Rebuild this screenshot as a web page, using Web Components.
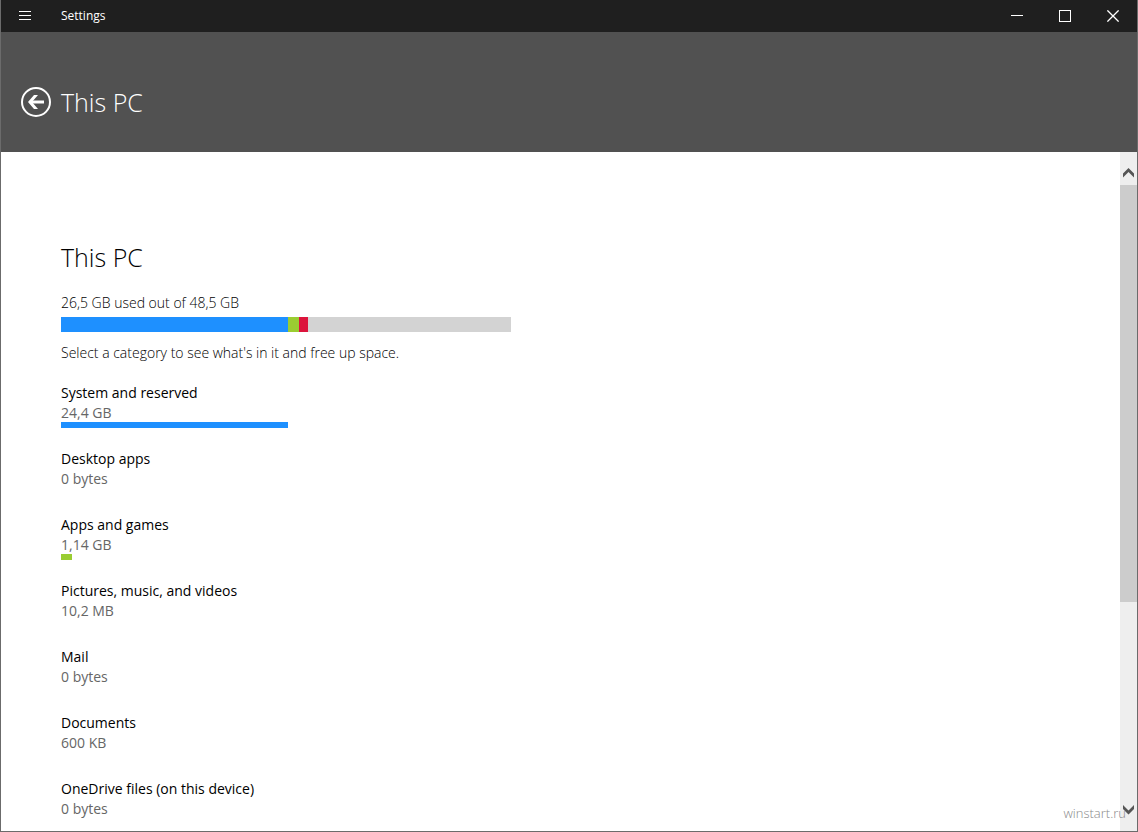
<!DOCTYPE html>
<html lang="en">
<head>
<meta charset="utf-8">
<title>Settings</title>
<style>
html, body { height: 100%; margin: 0; }
body { font-family: "Open Sans", "Noto Sans", sans-serif; font-size: 14px; line-height: 22px; color: #000; background: #fff; overflow: hidden; }
</style>
</head>
<body>
<settings-window>
  <title-bar slot="bar">Settings</title-bar>
  <page-header slot="header">This PC</page-header>
  <storage-summary heading="This PC" segments="227 #1e90ff,11 #9acd32,9 #dc143c" total="450">
    <span slot="usage">26,5 GB used out of 48,5 GB</span>
    <span slot="hint">Select a category to see what's in it and free up space.</span>
  </storage-summary>
  <storage-item size="24,4 GB" bar="227" color="#1e90ff">System and reserved</storage-item>
  <storage-item size="0 bytes">Desktop apps</storage-item>
  <storage-item size="1,14 GB" bar="11" color="#9acd32">Apps and games</storage-item>
  <storage-item size="10,2 MB">Pictures, music, and videos</storage-item>
  <storage-item size="0 bytes">Mail</storage-item>
  <storage-item size="600 KB">Documents</storage-item>
  <storage-item size="0 bytes">OneDrive files (on this device)</storage-item>
  <scroll-rail slot="rail"></scroll-rail>
  <water-mark slot="mark">winstart.ru</water-mark>
</settings-window>
<script>
const define = (name, html, setup) => customElements.define(name, class extends HTMLElement {
  constructor() {
    super();
    this.attachShadow({ mode: "open" }).innerHTML = html;
  }
  connectedCallback() { if (setup) setup(this, this.shadowRoot); }
});
const reset = `button { all: unset; box-sizing: border-box; display: grid; place-items: center; cursor: default; } svg { display: block; fill: none; stroke: currentColor; }`;

define("settings-window", `<style>
:host { box-sizing: border-box; position: relative; display: grid; grid-template-rows: auto auto minmax(0, 1fr); height: 100vh; border: solid #6b6b6b; border-width: 0 1px 1px; }
.body { display: grid; grid-template-columns: minmax(0, 1fr) 17px; min-height: 0; }
main { box-sizing: border-box; padding: 88px 60px 0; overflow: hidden; min-height: 0; }
</style>
<slot name="bar"></slot><slot name="header"></slot>
<div class="body"><main><slot></slot></main><slot name="rail"></slot></div><slot name="mark"></slot>`);

define("title-bar", `<style>${reset}
:host { display: flex; height: 32px; background: #1f1f1f; color: #fff; font-size: 12px; line-height: 32px; }
button { width: 48px; height: 32px; }
.title { flex: 1; padding-left: 12px; }
</style>
<button type="button" aria-label="Menu"><svg width="12" height="10" shape-rendering="crispEdges"><path d="M0 .5h12M0 4.500h12M0 8.500h12"/></svg></button>
<span class="title"><slot></slot></span>
<button type="button" aria-label="Minimize"><svg width="12" height="12" shape-rendering="crispEdges"><path d="M0 5.500h12"/></svg></button>
<button type="button" aria-label="Maximize"><svg width="12" height="12" shape-rendering="crispEdges"><rect x=".5" y=".5" width="11" height="11"/></svg></button>
<button type="button" aria-label="Close"><svg width="12" height="12" stroke-width="1.300"><path d="M.4.4l11.200 11.200M11.600.4L.4 11.600"/></svg></button>`);

define("page-header", `<style>${reset}
:host { box-sizing: border-box; display: flex; align-items: center; gap: 10px; height: 120px; padding: 20px 20px 0; background: #515151; color: #fff; }
button { width: 30px; height: 30px; }
h1 { margin: 0; font-size: 25px; line-height: 34px; font-weight: 300; }
</style>
<button type="button" aria-label="Back"><svg width="30" height="30" stroke-width="2"><circle cx="15" cy="15" r="14"/><path d="M23 15H9" stroke-width="3"/><path d="M7 15l6-7h4l-6 7 6 7h-4z" fill="currentColor" stroke="none"/></svg></button>
<h1><slot></slot></h1>`);

define("storage-summary", `<style>
:host { display: block; margin-bottom: 18px; }
h2 { margin: 0 0 18px; font-size: 25px; line-height: 34px; font-weight: 300; }
p { margin: 0; font-weight: 340; }
.meter { display: flex; max-width: 450px; height: 15px; margin: 3px 0 10px; background: #d3d3d3; }
</style>
<h2></h2><p><slot name="usage"></slot></p><div class="meter"></div><p><slot name="hint"></slot></p>`, (el, root) => {
  root.querySelector("h2").textContent = el.getAttribute("heading");
  const total = Number(el.getAttribute("total"));
  root.querySelector(".meter").replaceChildren(...el.getAttribute("segments").split(",").map(s => {
    const [value, color] = s.split(" ");
    const part = document.createElement("div");
    part.style.width = `${value / total * 100}%`;
    part.style.background = color;
    return part;
  }));
});

define("storage-item", `<style>
:host { display: block; margin-bottom: 20px; }
.size { color: #666; line-height: 18px; }
.bar { height: 6px; }
</style>
<div><slot></slot></div><div class="size"></div><div class="bar"></div>`, (el, root) => {
  root.querySelector(".size").textContent = el.getAttribute("size");
  const bar = root.querySelector(".bar");
  bar.style.width = `${el.getAttribute("bar") || 0}px`;
  bar.style.background = el.getAttribute("color") || "none";
});

define("scroll-rail", `<style>${reset}
:host { display: flex; flex-direction: column; min-height: 0; background: #eee; color: #555; }
button { width: 17px; height: 33px; }
.up { padding-top: 8px; }
.down { padding-bottom: 10px; }
.track { flex: 1; }
.thumb { height: 68%; background: #ccc; }
svg { fill: currentColor; stroke: none; }
</style>
<button type="button" class="up" aria-label="Scroll up"><svg width="11" height="10"><path d="M0 5.500l5.500-5.500 5.500 5.500v4l-5.500-5.500-5.500 5.500z"/></svg></button>
<div class="track"><div class="thumb"></div></div>
<button type="button" class="down" aria-label="Scroll down"><svg width="11" height="10"><path d="M0 0l5.500 5.500 5.500-5.500v4l-5.500 5.500-5.500-5.500z"/></svg></button>`);

define("water-mark", `<style>
:host { position: absolute; right: 11px; bottom: 8px; color: #888; font-size: 13px; font-weight: 300; line-height: 20px; }
</style><slot></slot>`);
</script>
</body>
</html>
